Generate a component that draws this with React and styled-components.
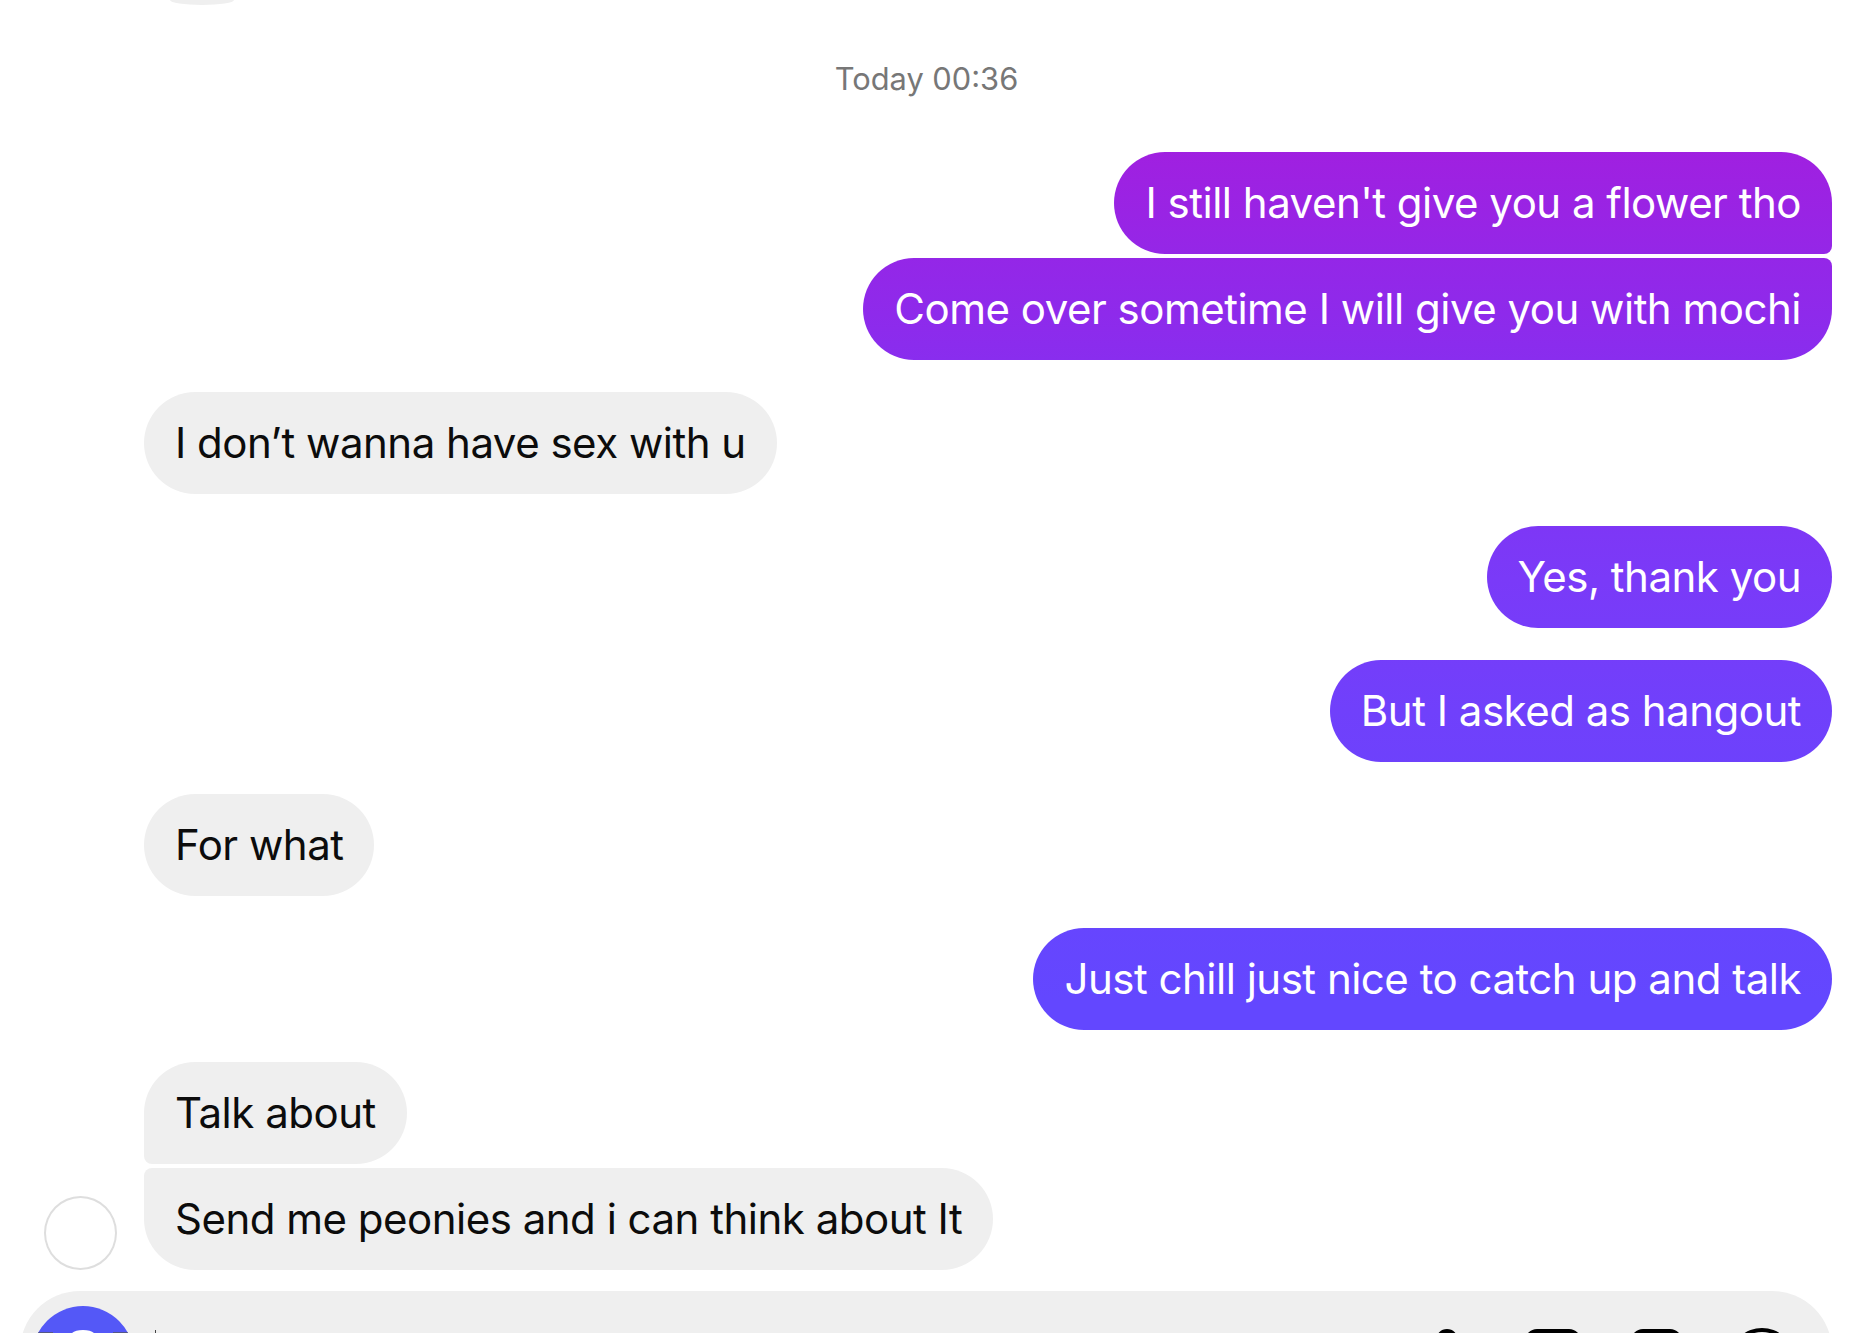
import React from 'react';
import styled, { createGlobalStyle } from 'styled-components';

const GlobalStyle = createGlobalStyle`
  html, body {
    margin: 0;
    padding: 0;
    background: #fff;
  }
`;

const Page = styled.div`
  width: 1853px;
  height: 1333px;
  overflow: hidden;
  display: flex;
  flex-direction: column;
  font-family: Inter, "Liberation Sans", sans-serif;
`;

const TopSliver = styled.div`
  flex-shrink: 0;
  width: 64px;
  height: 5px;
  margin-left: 170px;
  background: #efefef;
  border-radius: 0 0 32px 32px / 0 0 5px 5px;
`;

const Stamp = styled.div`
  flex-shrink: 0;
  margin-top: 56px;
  height: 36px;
  line-height: 36px;
  text-align: center;
  font-size: 30.8px;
  color: #777;
`;

const Thread = styled.div`
  flex-shrink: 0;
  margin-top: 55px;
  padding: 0 21px 0 44px;
  display: flex;
  flex-direction: column;
`;

const Row = styled.div`
  display: flex;
  align-items: flex-end;
  justify-content: ${p => (p.$mine ? 'flex-end' : 'flex-start')};
  padding-left: ${p => (p.$mine ? '0' : '100px')};
  margin-top: ${p => (p.$grouped ? '4px' : '32px')};

  &:first-child {
    margin-top: 0;
  }
`;

const Bubble = styled.div`
  height: 102px;
  line-height: 102px;
  padding: 0 31px;
  font-size: 42px;
  letter-spacing: -0.5px;
  white-space: nowrap;
  border-radius: ${p => p.$corners || '51px'};
  background: #efefef;
  color: #0c0c0c;
`;

const MineBubble = styled(Bubble)`
  color: #fff;
  background: linear-gradient(180deg, #a020e0 150px, #892dee 360px, #7a3af8 580px, #7040fb 710px, #6347ff 1000px) fixed;
`;

const AvatarRow = styled(Row)`
  padding-left: 0;
  gap: 27px;
`;

const Avatar = styled.div`
  width: 73px;
  height: 74px;
  box-sizing: border-box;
  border: 2px solid #dedede;
  border-radius: 50%;
`;

const Composer = styled.div`
  flex-shrink: 0;
  margin: 21px 21px 0 20px;
  height: 120px;
  padding: 15px 0 0 12px;
  box-sizing: border-box;
  display: flex;
  align-items: flex-start;
  background: #efefef;
  border-radius: 60px 60px 0 0;
`;

const CameraButton = styled.div`
  width: 102px;
  height: 102px;
  border-radius: 50%;
  overflow: hidden;
  background: #5458f7;
`;

const Caret = styled.div`
  width: 1px;
  height: 30px;
  margin: 24px 0 0 21px;
  background: #444;
`;

const Tools = styled.div`
  margin-left: auto;
  margin-right: 40px;
  padding-top: 23px;
  display: flex;
  gap: 50px;
`;

const ToolIcon = styled.div`
  width: ${p => p.$size}px;
  height: 54px;
  margin-top: ${p => p.$lift || 0}px;
  margin-right: ${p => p.$after || 0}px;
  border: 4px solid #000;
  box-sizing: border-box;
  border-radius: ${p => p.$radius || '12px'};
`;

const messages = [
  { id: 1, mine: true, text: "I still haven't give you a flower tho", corners: '51px 51px 8px 51px' },
  { id: 2, mine: true, grouped: true, text: 'Come over sometime I will give you with mochi', corners: '51px 8px 51px 51px' },
  { id: 3, text: 'I don’t wanna have sex with u' },
  { id: 4, mine: true, text: 'Yes, thank you' },
  { id: 5, mine: true, text: 'But I asked as hangout' },
  { id: 6, text: 'For what' },
  { id: 7, mine: true, text: 'Just chill just nice to catch up and talk' },
  { id: 8, text: 'Talk about', corners: '51px 51px 51px 8px' },
];

export default function App() {
  return (
    <Page>
      <GlobalStyle />
      <TopSliver />
      <Stamp>Today 00:36</Stamp>
      <Thread>
        {messages.map(m => (
          <Row key={m.id} $mine={m.mine} $grouped={m.grouped}>
            {m.mine ? (
              <MineBubble $corners={m.corners}>{m.text}</MineBubble>
            ) : (
              <Bubble $corners={m.corners}>{m.text}</Bubble>
            )}
          </Row>
        ))}
        <AvatarRow $grouped>
          <Avatar />
          <Bubble $corners="8px 51px 51px 51px">Send me peonies and i can think about It</Bubble>
        </AvatarRow>
      </Thread>
      <Composer>
        <CameraButton>
          <svg width="102" height="102" viewBox="0 0 102 102">
            <rect x="6" y="26" width="15" height="3" fill="#555885" />
            <rect x="81" y="26" width="16" height="3" fill="#555885" />
            <path
              d="M38 31c0-4 5-7 13-7s13 3 13 7l3 4H35z"
              fill="#fff"
            />
          </svg>
        </CameraButton>
        <Caret />
        <Tools>
          <ToolIcon $size={22} $radius="11px" $after={17} />
          <ToolIcon $size={56} />
          <ToolIcon $size={51} />
          <ToolIcon $size={60} $radius="50%" $lift={-1} />
        </Tools>
      </Composer>
    </Page>
  );
}
